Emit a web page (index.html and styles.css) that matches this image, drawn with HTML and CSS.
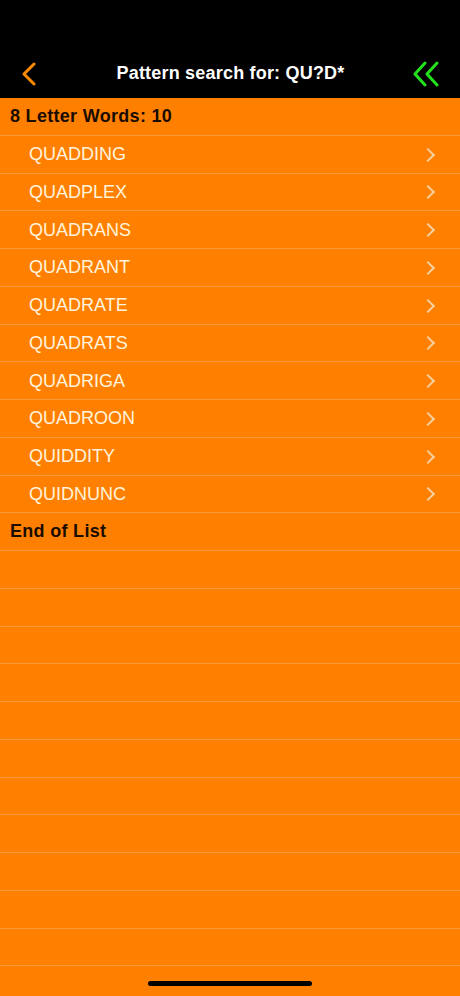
FILE: index.html
```html
<!DOCTYPE html>
<html>
<head>
<meta charset="utf-8">
<link rel="stylesheet" href="styles.css">
</head>
<body>
<div class="screen">
  <header class="topbar">
    <div class="status"></div>
    <nav class="nav">
      <svg class="back" width="16" height="24" viewBox="0 0 16 24"><path d="M13 2 L3 12 L13 22" fill="none" stroke="#ff8a00" stroke-width="3" stroke-linecap="round" stroke-linejoin="round"/></svg>
      <h1 class="title">Pattern search for: QU?D*</h1>
      <svg class="dbl" width="28" height="26" viewBox="0 0 28 26"><path d="M13 2 L3 13 L13 24 M25 2 L15 13 L25 24" fill="none" stroke="#22e21c" stroke-width="3" stroke-linecap="round" stroke-linejoin="round"/></svg>
    </nav>
  </header>
  <ul class="list">
    <li class="row head">8 Letter Words: 10</li>
    <li class="row word"><span>QUADDING</span><i class="chev"></i></li>
    <li class="row word"><span>QUADPLEX</span><i class="chev"></i></li>
    <li class="row word"><span>QUADRANS</span><i class="chev"></i></li>
    <li class="row word"><span>QUADRANT</span><i class="chev"></i></li>
    <li class="row word"><span>QUADRATE</span><i class="chev"></i></li>
    <li class="row word"><span>QUADRATS</span><i class="chev"></i></li>
    <li class="row word"><span>QUADRIGA</span><i class="chev"></i></li>
    <li class="row word"><span>QUADROON</span><i class="chev"></i></li>
    <li class="row word"><span>QUIDDITY</span><i class="chev"></i></li>
    <li class="row word"><span>QUIDNUNC</span><i class="chev"></i></li>
    <li class="row head">End of List</li>
    <li class="row"></li>
    <li class="row"></li>
    <li class="row"></li>
    <li class="row"></li>
    <li class="row"></li>
    <li class="row"></li>
    <li class="row"></li>
    <li class="row"></li>
    <li class="row"></li>
    <li class="row"></li>
    <li class="row"></li>
    <li class="row"></li>
  </ul>
  <div class="home"></div>
</div>
</body>
</html>
```
FILE: styles.css
```css
html, body {
  margin: 0;
  padding: 0;
  background: #ff8000;
}
.screen {
  position: relative;
  width: 460px;
  height: 996px;
  overflow: hidden;
  background: #ff8000;
  font-family: "Liberation Sans", Arial, sans-serif;
}
.topbar {
  background: #000;
  height: 98px;
  display: flex;
  flex-direction: column;
}
.status {
  height: 50px;
}
.nav {
  height: 48px;
  display: grid;
  grid-template-columns: 1fr auto 1fr;
  align-items: center;
  padding: 0 20px 0 21px;
  box-sizing: border-box;
}
.back {
  margin-top: -1px;
  justify-self: start;
}
.dbl {
  margin-top: -1px;
  justify-self: end;
}
.title {
  margin: 0;
  color: #fff;
  font-size: 18px;
  font-weight: bold;
  letter-spacing: 0.2px;
  margin-top: -1px;
}
.list {
  list-style: none;
  margin: 0;
  padding: 0;
}
.row {
  height: 37.75px;
  box-sizing: border-box;
  border-bottom: 1px solid #fb9a3c;
  display: flex;
  align-items: center;
}
.head {
  padding-left: 10px;
  color: #1a0c00;
  font-size: 18px;
  font-weight: bold;
  letter-spacing: 0.3px;
}
.word {
  padding-left: 29px;
  padding-right: 25px;
  justify-content: space-between;
  color: #fff3dc;
  font-size: 18px;
  padding-top: 1px;
}
.chev {
  width: 8px;
  height: 8px;
  border-top: 2px solid #f6cf9c;
  border-right: 2px solid #f6cf9c;
  transform: rotate(45deg);
  margin-right: 2px;
}
.home {
  position: absolute;
  left: 148px;
  bottom: 10px;
  width: 164px;
  height: 5px;
  border-radius: 3px;
  background: #000;
}
```
